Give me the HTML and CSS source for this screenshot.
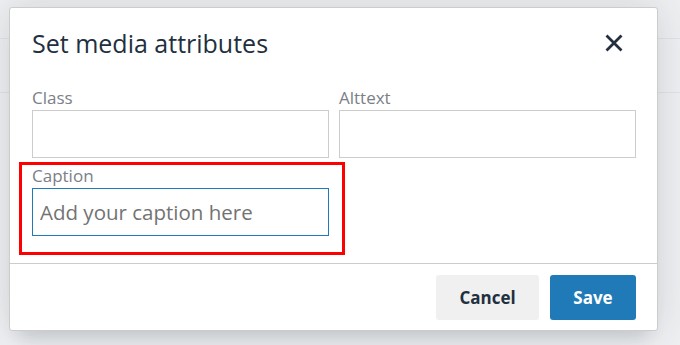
FILE: index.html
```html
<!DOCTYPE html>
<html>

<head>
    <meta charset="UTF-8">
    <meta name="viewport" content="width=device-width, initial-scale=1.0">
    <title>Set media attributes</title>
    <link rel="stylesheet" href="styles.css">
</head>

<body>
    <div class="dialog">
        <div class="dialog_header">
            <h2 class="dialog_title">Set media attributes</h2>
            <button class="dialog_close" aria-label="Close">
                <svg width="18" height="18" viewBox="0 0 18 18">
                    <path d="M1.5 1.5 L16.5 16.5 M16.5 1.5 L1.5 16.5" stroke="#222f3e" stroke-width="2.8" stroke-linecap="butt" fill="none"/>
                </svg>
            </button>
        </div>
        <div class="dialog_body">
            <div class="form_row">
                <div class="form_group">
                    <label class="form_label">Class</label>
                    <input class="form_input" type="text">
                </div>
                <div class="form_group">
                    <label class="form_label">Alttext</label>
                    <input class="form_input" type="text">
                </div>
            </div>
            <div class="form_row">
                <div class="form_group highlighted">
                    <label class="form_label">Caption</label>
                    <input class="form_input focused" type="text" placeholder="Add your caption here">
                </div>
                <div class="form_group"></div>
            </div>
        </div>
        <div class="dialog_footer">
            <button class="btn btn_secondary">Cancel</button>
            <button class="btn btn_primary">Save</button>
        </div>
    </div>
</body>

</html>
```

FILE: styles.css
```css
html,
body {
    margin: 0;
    padding: 0;
    height: 100%;
    overflow: hidden;
}

body {
    background-color: #eff0f2;
    background-image:
        linear-gradient(to bottom, transparent 38px, #e1e3e6 38px, #e1e3e6 39px, transparent 39px),
        linear-gradient(to bottom, transparent 92px, #e1e3e6 92px, #e1e3e6 93px, transparent 93px);
    font-family: 'Open Sans', 'Noto Sans', sans-serif;
    padding: 7px 0 0 9px;
    box-sizing: border-box;
}

.dialog {
    width: 649px;
    height: 324px;
    box-sizing: border-box;
    background: #ffffff;
    border: 1px solid #cccccc;
    border-radius: 3px;
    box-shadow: 0 16px 16px -10px rgba(34, 47, 62, 0.15), 0 0 40px 1px rgba(34, 47, 62, 0.15);
    display: flex;
    flex-direction: column;
}

.dialog_header {
    height: 70px;
    padding: 0 34px 0 22px;
    display: flex;
    align-items: center;
    justify-content: space-between;
}

.dialog_title {
    margin: 0;
    font-size: 25px;
    font-weight: normal;
    color: #222f3e;
    line-height: 32px;
}

.dialog_close {
    background: none;
    border: 0;
    padding: 0;
    width: 18px;
    height: 18px;
    display: flex;
}

.dialog_body {
    padding: 8px 21px 0 22px;
    display: flex;
    flex-direction: column;
    gap: 6px;
    flex: 1;
}

.form_row {
    display: flex;
    gap: 10px;
}

.form_group {
    flex: 1;
    display: flex;
    flex-direction: column;
    position: relative;
}

.form_label {
    font-size: 17px;
    line-height: 24px;
    color: #7b8088;
}

.form_input {
    height: 48px;
    box-sizing: border-box;
    border: 1px solid #cccccc;
    border-radius: 0;
    margin: 0;
    padding: 0 7px;
    font-family: inherit;
    font-size: 20.5px;
    color: #222f3e;
    outline: none;
}

.form_input::placeholder {
    color: #737373;
}

.form_input.focused {
    border-color: #207ab7;
}

.highlighted::after {
    content: "";
    position: absolute;
    left: -13px;
    top: -2px;
    right: -16px;
    bottom: -19px;
    border: 3px solid #ff0000;
}

.dialog_footer {
    border-top: 1px solid #cccccc;
    padding: 11px 21px 10px 0;
    display: flex;
    justify-content: flex-end;
    gap: 11px;
}

.btn {
    height: 45px;
    border: 0;
    border-radius: 3px;
    font-family: inherit;
    font-size: 17px;
    font-weight: bold;
    padding: 0;
}

.btn_secondary {
    width: 103px;
    background: #f0f0f0;
    color: #222f3e;
}

.btn_primary {
    width: 86px;
    background: #207ab7;
    color: #ffffff;
}
```
